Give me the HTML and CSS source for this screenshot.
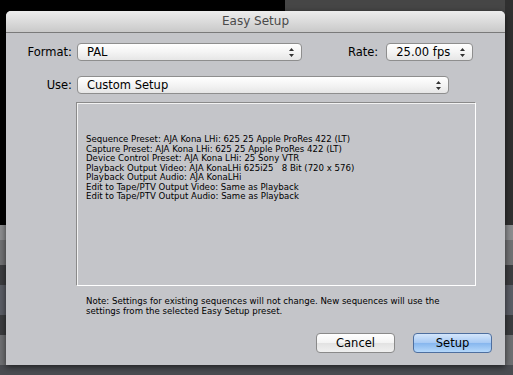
FILE: index.html
```html
<!DOCTYPE html>
<html lang="en">
<head>
    <meta charset="UTF-8">
    <title>Easy Setup</title>
    <link rel="stylesheet" href="styles.css">
</head>
<body>
    <div class="desktop">
        <div class="dialog">
            <div class="titlebar">Easy Setup</div>

            <div class="dialog-body">
                <!-- Format / Rate -->
                <div class="row">
                    <span class="label">Format:</span>
                    <div class="popup popup-format">
                        <span>PAL</span>
                        <svg class="arrows" width="5" height="9" viewBox="0 0 5 9"><path d="M2.5 0 L5 3 L0 3 Z M2.5 9 L5 6 L0 6 Z" fill="#333"/></svg>
                    </div>
                    <span class="label-rate">Rate:</span>
                    <div class="popup popup-rate">
                        <span>25.00 fps</span>
                        <svg class="arrows" width="5" height="9" viewBox="0 0 5 9"><path d="M2.5 0 L5 3 L0 3 Z M2.5 9 L5 6 L0 6 Z" fill="#333"/></svg>
                    </div>
                </div>

                <!-- Use -->
                <div class="row row-use">
                    <span class="label">Use:</span>
                    <div class="popup popup-use">
                        <span>Custom Setup</span>
                        <svg class="arrows" width="5" height="9" viewBox="0 0 5 9"><path d="M2.5 0 L5 3 L0 3 Z M2.5 9 L5 6 L0 6 Z" fill="#333"/></svg>
                    </div>
                </div>

                <!-- Preset summary -->
                <div class="summary">
                    <div>Sequence Preset: AJA Kona LHi: 625 25 Apple ProRes 422 (LT)</div>
                    <div>Capture Preset: AJA Kona LHi: 625 25 Apple ProRes 422 (LT)</div>
                    <div>Device Control Preset: AJA Kona LHi: 25 Sony VTR</div>
                    <div>Playback Output Video: AJA KonaLHi 625i25&nbsp;&nbsp; 8 Bit (720 x 576)</div>
                    <div>Playback Output Audio: AJA KonaLHi</div>
                    <div>Edit to Tape/PTV Output Video: Same as Playback</div>
                    <div>Edit to Tape/PTV Output Audio: Same as Playback</div>
                </div>

                <p class="note">Note: Settings for existing sequences will not change. New sequences will use the settings from the selected Easy Setup preset.</p>

                <div class="buttons">
                    <button class="btn">Cancel</button>
                    <button class="btn btn-default">Setup</button>
                </div>
            </div>
        </div>
    </div>
</body>
</html>
```

FILE: styles.css
```css
:root {
    --panel: #c4c5c9;
    --text: #000000;
    --border: #8a8a8a;
}

body {
    margin: 0;
    background: #000;
    font-family: 'DejaVu Sans', sans-serif;
    color: var(--text);
}

/* background behind the sheet */
.desktop {
    width: 513px;
    height: 375px;
    overflow: hidden;
    padding-top: 11px;
    box-sizing: border-box;
    background:
        linear-gradient(#4a4c51, #4a4c51) 0 365px / 100% 10px no-repeat,
        linear-gradient(#000 0 225px, #8c8d8f 225px 240px, #707173 240px 265px, #3c3d40 265px 285px, #5a5d65 285px 315px, #3b3c3f 315px 335px, #6e6f72 335px 365px) 0 0 / 6px 100% no-repeat,
        linear-gradient(#303030 0 225px, #8c8d8f 225px 240px, #707173 240px 265px, #3c3d40 265px 285px, #5a5d65 285px 315px, #3b3c3f 315px 335px, #6e6f72 335px 365px) 505px 0 / 8px 100% no-repeat,
        linear-gradient(to right, #000 0 285px, #464646 285px);
}

.dialog {
    margin-left: 6px;
    width: 499px;
    height: 354px;
    background: var(--panel);
    border-radius: 5px 5px 0 0;
    box-shadow: 0 2px 6px rgba(0, 0, 0, 0.6);
}

.titlebar {
    height: 21px;
    line-height: 21px;
    text-align: center;
    font-size: 12px;
    color: #4a4a4a;
    background: linear-gradient(#ededed, #c9c9c9);
    border-bottom: 1px solid #7a7a7a;
    border-radius: 5px 5px 0 0;
}

.dialog-body {
    padding: 10px 13px 0 10px;
}

.row {
    display: flex;
    align-items: center;
    height: 18px;
    font-size: 11.5px;
}

.row-use {
    margin-top: 15px;
}

.label {
    width: 56px;
    text-align: right;
    margin-right: 5px;
}

.label-rate {
    margin-left: 46px;
    margin-right: 8px;
}

.popup {
    height: 18px;
    box-sizing: border-box;
    border: 1px solid #8e8e8e;
    border-radius: 4px;
    background: linear-gradient(#ffffff, #f4f4f4 50%, #e6e6e6);
    display: flex;
    align-items: center;
    justify-content: space-between;
    padding: 0 7px 0 9px;
    color: #000;
}

.popup-format {
    width: 225px;
}

.popup-rate {
    width: 87px;
}

.popup-use {
    width: 372px;
}

.summary {
    margin: 8px 0 0 60px;
    width: 400px;
    height: 184px;
    box-sizing: border-box;
    border: 1px solid;
    border-color: #8a8a8a #ffffff #ffffff #8a8a8a;
    box-shadow: inset 1px 1px 0 #f2f2f2;
    padding: 32px 0 0 9px;
    font-size: 8.6px;
    line-height: 9.5px;
}

.note {
    margin: 10px 0 0 70px;
    font-size: 8.6px;
    line-height: 10px;
    width: 365px;
}

.buttons {
    display: flex;
    justify-content: flex-end;
    gap: 18px;
    margin-top: 17px;
}

.btn {
    width: 79px;
    height: 20px;
    padding: 0;
    font-family: 'DejaVu Sans', sans-serif;
    font-size: 11.5px;
    color: #000;
    border: 1px solid #8a8a8a;
    border-radius: 4px;
    background: linear-gradient(#ffffff, #f3f3f3 50%, #e2e2e2 51%, #f0f0f0);
}

.btn-default {
    border-color: #4e6f9f;
    background: linear-gradient(#d4e6fb, #a6c9f4 50%, #86b6ee 51%, #b5d8fb);
}
```
